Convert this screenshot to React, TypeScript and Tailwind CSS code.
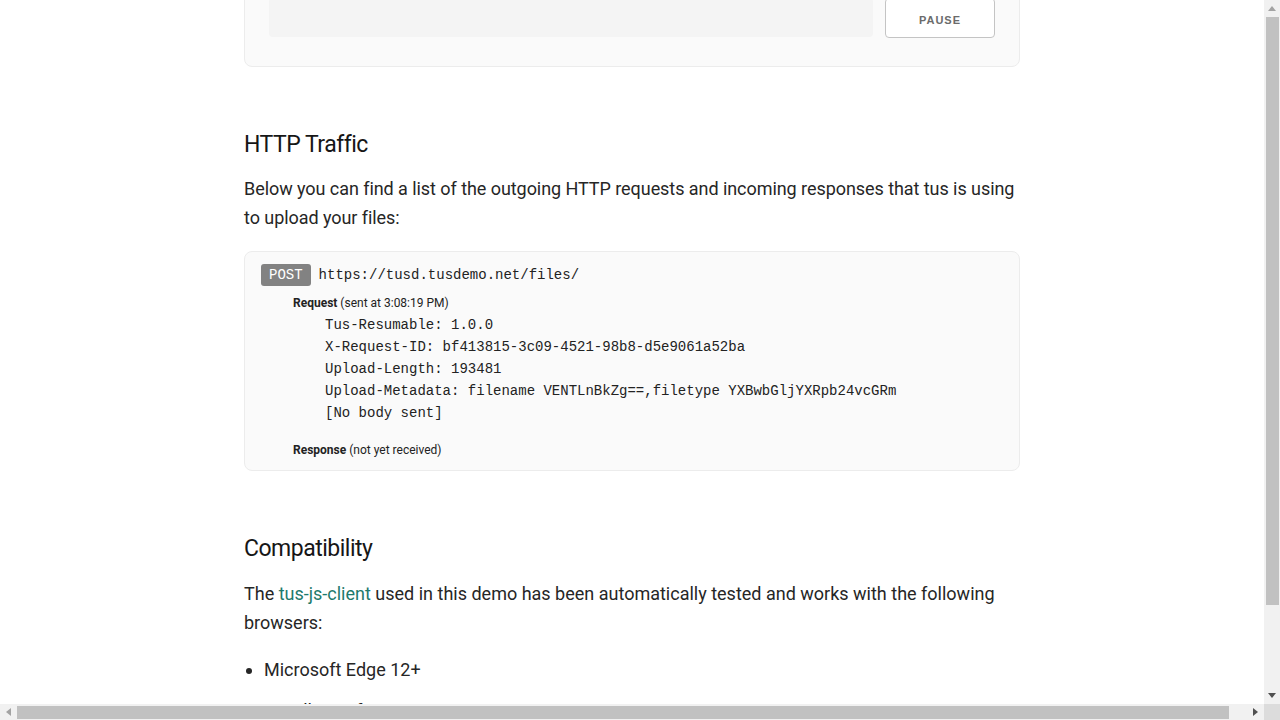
const sans = "font-['Roboto','Noto_Sans',sans-serif]";
const mono = "font-['Liberation_Mono','Courier_New',monospace]";

const requestHeaders = [
    "Tus-Resumable: 1.0.0",
    "X-Request-ID: bf413815-3c09-4521-98b8-d5e9061a52ba",
    "Upload-Length: 193481",
    "Upload-Metadata: filename VENTLnBkZg==,filetype YXBwbGljYXRpb24vcGRm",
    "[No body sent]",
];

const browsers = ["Microsoft Edge 12+", "Mozilla Firefox 14+", "Google Chrome 20+"];

const VScroll = () => (
    <div className="w-4 h-full bg-[#f1f1f1] flex flex-col items-center">
        <div className="h-[17px] w-full flex items-center justify-center">
            <svg width="8" height="5" viewBox="0 0 8 5">
                <path d="M0 5 L4 0 L8 5 Z" fill="#a3a3a3" />
            </svg>
        </div>
        <div className="w-[13px] h-[588px] bg-[#c1c1c1]" />
        <div className="flex-1" />
        <div className="h-[17px] w-full flex items-center justify-center">
            <svg width="8" height="5" viewBox="0 0 8 5">
                <path d="M0 0 L4 5 L8 0 Z" fill="#505050" />
            </svg>
        </div>
    </div>
);

const HScroll = () => (
    <div className="h-4 w-full flex">
        <div className="flex-1 bg-[#f1f1f1] flex items-center">
            <div className="w-[17px] h-full flex items-center justify-center">
                <svg width="5" height="8" viewBox="0 0 5 8">
                    <path d="M5 0 L0 4 L5 8 Z" fill="#a3a3a3" />
                </svg>
            </div>
            <div className="w-[1212px] h-[13px] bg-[#c1c1c1]" />
            <div className="flex-1" />
            <div className="w-[17px] h-full flex items-center justify-center">
                <svg width="5" height="8" viewBox="0 0 5 8">
                    <path d="M0 0 L5 4 L0 8 Z" fill="#505050" />
                </svg>
            </div>
        </div>
        <div className="w-4 h-full bg-[#dcdcdc]" />
    </div>
);

const App = () => {
    return (
        <div className={`w-[1280px] h-[720px] flex flex-col overflow-hidden bg-white ${sans}`}>
            <div className="flex flex-1 min-h-0">
                <main className="flex-1 overflow-hidden">
                    <div className="w-[776px] mx-auto mt-[-27px]">
                        {/* upload card, scrolled mostly out of view */}
                        <div className="border border-[#ececec] bg-[#fafafa] rounded-lg px-6 pt-6 pb-[28px] flex items-start gap-3">
                            <div className="flex-1 h-[39px] bg-[#f4f4f4] rounded-sm" />
                            <button className="w-[110px] h-10 pt-1 border border-[#c4c4c4] rounded bg-white text-[11px] font-bold tracking-[1px] text-[#6b6b6b] font-['Liberation_Sans',Arial,sans-serif]">
                                PAUSE
                            </button>
                        </div>

                        <h2 className="mt-[62px] text-[23px] leading-8 tracking-[-0.5px] text-[#161616]">
                            HTTP Traffic
                        </h2>
                        <p className="mt-[13px] text-[18px] leading-[29px] tracking-[-0.06px] text-[#262626]">
                            Below you can find a list of the outgoing HTTP requests and incoming
                            responses that tus is using to upload your files:
                        </p>

                        <div className="mt-[19px] h-[220px] border border-[#ececec] bg-[#fafafa] rounded-lg px-4 pt-3">
                            <div className="flex items-center">
                                <span className={`h-[22px] px-2 rounded-[3px] bg-[#828282] text-white text-[14px] leading-[22px] ${mono}`}>
                                    POST
                                </span>
                                <span className={`ml-2 text-[14px] text-[#222] ${mono}`}>
                                    https://tusd.tusdemo.net/files/
                                </span>
                            </div>
                            <div className="pl-8">
                                <div className="mt-[9px] text-[12px] leading-4 text-[#222]">
                                    <span className="font-bold">Request</span> (sent at 3:08:19 PM)
                                </div>
                                <div className={`mt-[3px] pl-8 text-[14px] leading-[22px] text-[#222] ${mono}`}>
                                    {requestHeaders.map((line) => (
                                        <div key={line}>{line}</div>
                                    ))}
                                </div>
                                <div className="mt-[18px] text-[12px] leading-4 text-[#222]">
                                    <span className="font-bold">Response</span> (not yet received)
                                </div>
                            </div>
                        </div>

                        <h2 className="mt-[62px] text-[23px] leading-8 tracking-[-0.5px] text-[#161616]">
                            Compatibility
                        </h2>
                        <p className="mt-[14px] text-[18px] leading-[29px] text-[#262626]">
                            The <a href="#" className="text-[#1e7a6c]">tus-js-client</a> used in
                            this demo has been automatically tested and works with the following
                            browsers:
                        </p>
                        <ul className="mt-[18px] list-disc pl-5 text-[18px] leading-[29px] text-[#262626]">
                            {browsers.map((b) => (
                                <li key={b} className="mb-3">
                                    {b}
                                </li>
                            ))}
                        </ul>
                    </div>
                </main>
                <VScroll />
            </div>
            <HScroll />
        </div>
    );
};

export default App;
